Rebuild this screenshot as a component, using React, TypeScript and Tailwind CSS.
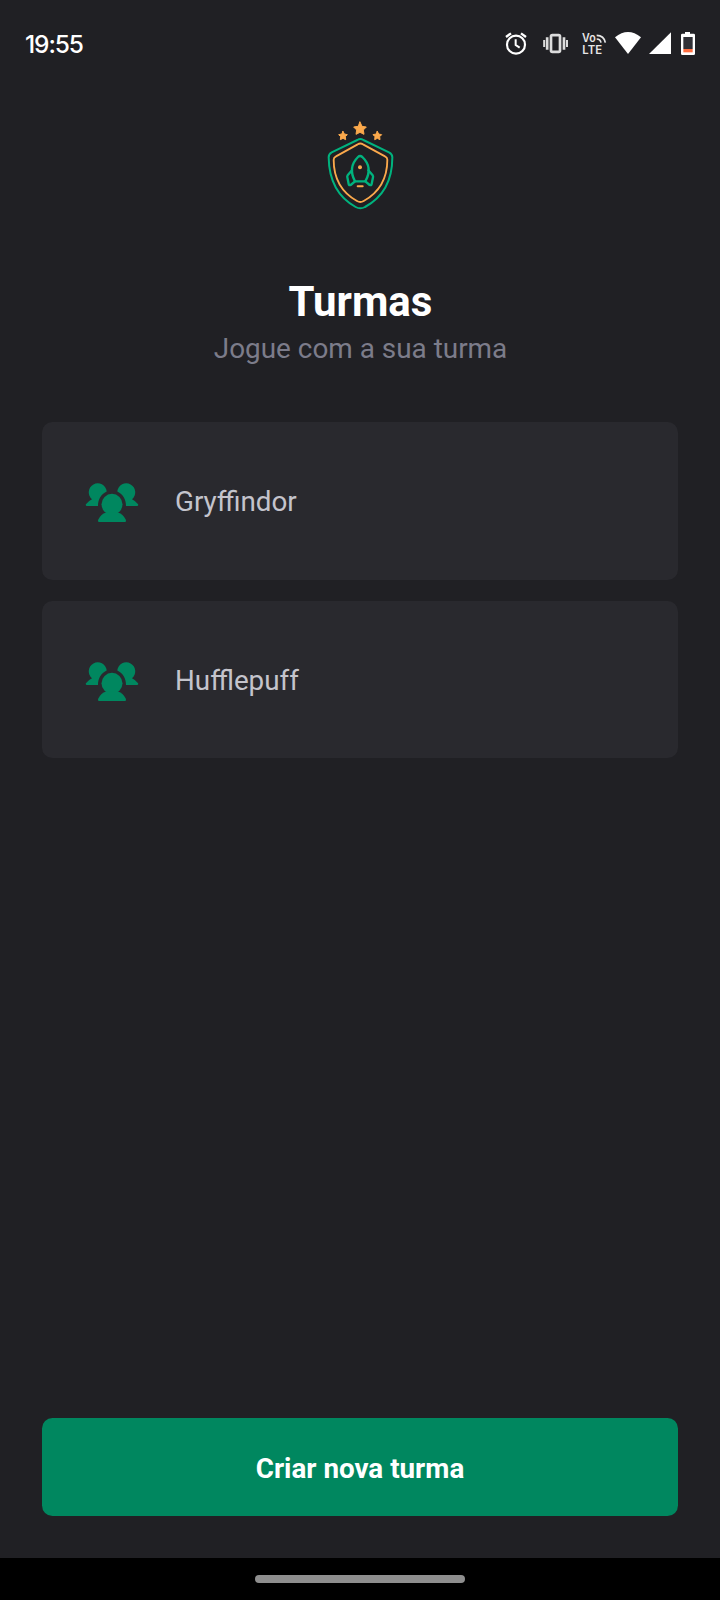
const groups = ['Gryffindor', 'Hufflepuff'];

function StatusIcons() {
  return (
    <svg className="h-[50px] w-[230px]" viewBox="0 0 690 150" fill="none">
      {/* alarm */}
      <g stroke="#fff" strokeLinecap="butt">
        <circle cx="78" cy="74" r="27" strokeWidth="6.5" />
        <path d="M77 58v17l12 8" strokeWidth="6" />
        <path d="M48 51l15-11M108 51L93 40" strokeWidth="7" />
      </g>
      {/* vibrate */}
      <g stroke="#dcdcdc">
        <rect x="183" y="45.500" width="27" height="50" rx="4" strokeWidth="8" />
        <path d="M171.500 52v37M222 52v37" strokeWidth="8" />
        <path d="M162.500 60v21M231 60v21" strokeWidth="6" />
      </g>
      {/* VoLTE */}
      <g fill="#e6e6e6" fontFamily="Inter, sans-serif" fontWeight="600">
        <text x="276" y="66" fontSize="34" textLength="41" lengthAdjust="spacingAndGlyphs">Vo</text>
        <text x="277" y="102" fontSize="35" textLength="59" lengthAdjust="spacingAndGlyphs">LTE</text>
      </g>
      <g stroke="#e6e6e6" strokeWidth="5">
        <path d="M320 57q11 0 13 11M320 46q22 0 26 22" />
      </g>
      {/* wifi */}
      <path d="M375 52q39-32 78 0l-39 50z" fill="#fff" />
      {/* signal */}
      <path d="M543 37v65h-66z" fill="#fff" />
      {/* battery */}
      <path d="M585 36h15v5h11q4 0 4 4v56q0 4-4 4h-34q-4 0-4-4V45q0-4 4-4h8z" fill="#fff" />
      <path d="M580 51h28v36h-28z" fill="#303036" />
      <path d="M580 87h28v10h-28z" fill="#ff6e40" />
    </svg>
  );
}

function Crest() {
  return (
    <svg className="h-[110px] w-[100px]" viewBox="0 0 300 330" fill="none" strokeLinejoin="round" strokeLinecap="round">
      <g fill="#FBA94C" stroke="#FBA94C" strokeWidth="3">
        <path d="M150 36l6 13 13 2-9 9 2 13-12-6-12 6 2-13-9-9 13-2z" />
        <path d="M99 64l4 8 9 2-6 6 1 9-8-4-8 4 1-9-6-6 9-2z" />
        <path d="M202 64l4 8 9 2-6 6 1 9-8-4-8 4 1-9-6-6 9-2z" />
      </g>
      <path d="M142 90q9-6 18 0L237 127q10 5 10 15c0 70-28 120-82 149q-14 8-28 0C84 262 57 212 56 142q0-10 9-15z" stroke="#00B37E" strokeWidth="6" />
      <path d="M143 103q8-5 16 0L225 139q7 3 7 10c0 58-23 97-71 124q-10 6-20 0C93 246 71 207 71 149q0-7 7-10z" stroke="#FBA94C" strokeWidth="5.5" />
      <g stroke="#00B37E" strokeWidth="7">
        <path d="M144 141q6-6 13 0C179 162 181 188 166 214h-31C121 188 123 162 144 141z" />
        <path d="M126 181L113 196q-2 3-1 6l4 20q1 5 6 3l13-11" />
        <path d="M175 181L188 196q2 3 1 6l-4 20q-1 5-6 3l-13-11" />
      </g>
      <circle cx="150" cy="172" r="6" fill="#FBA94C" />
      <path d="M143 229h15" stroke="#FBA94C" strokeWidth="6" />
    </svg>
  );
}

function GroupIcon() {
  return (
    <svg className="mt-px size-14 shrink-0" viewBox="0 0 56 56" fill="#00875F">
      <circle cx="28" cy="31.3" r="10.5" />
      <path d="M22 39.500Q17 41 14.200 46.700Q13.500 49 15.500 49h25Q42.500 49 41.800 46.700Q39 41 34 39.500z" />
      <path d="M22.700 18.200A9 9 0 1 0 8 26.200Q4.500 27.800 1.900 31.300Q1.300 33 3 33H14C14 26.500 17 21.500 22.600 18.600z" />
      <path d="M33.300 18.200A9 9 0 1 1 48 26.200Q51.500 27.800 54.100 31.300Q54.700 33 53 33H42C42 26.500 39 21.500 33.400 18.600z" />
    </svg>
  );
}

export default function App() {
  return (
    <div className="flex h-[1600px] w-[720px] flex-col bg-[#202024] font-[Roboto,sans-serif]">
      <header className="flex h-[90px] items-start justify-between pt-5 pl-[25px]">
        <span className="pt-[6px] font-['Inter',sans-serif] text-[24.5px] leading-9 font-[450] tracking-[-1.1px] text-white">19:55</span>
        <StatusIcons />
      </header>
      <main className="flex flex-1 flex-col items-center px-[42px] pt-5">
        <Crest />
        <h1 className="mt-[57px] pl-px text-[42px] leading-[49px] font-bold text-white">Turmas</h1>
        <p className="mt-[6px] pl-px text-[27.9px] leading-[33px] text-[#7C7C8A]">Jogue com a sua turma</p>
        <ul className="mt-[57px] flex w-full flex-col gap-[21px]">
          {groups.map((name) => (
            <li key={name} className="flex h-[157.5px] items-center gap-[35px] rounded-[10.5px] bg-[#29292E] px-[42px]">
              <GroupIcon />
              <span className="pt-0.5 text-[27.8px] leading-[33px] text-[#C4C4CC]">{name}</span>
            </li>
          ))}
        </ul>
        <button className="mt-auto mb-[42px] h-[98px] w-full rounded-[10.5px] bg-[#00875F] pt-[3px] text-[27.8px] font-bold text-white">
          Criar nova turma
        </button>
      </main>
      <footer className="flex h-[42px] items-center justify-center bg-black">
        <div className="h-2 w-[210px] rounded-full bg-[#8e8e8e]" />
      </footer>
    </div>
  );
}
